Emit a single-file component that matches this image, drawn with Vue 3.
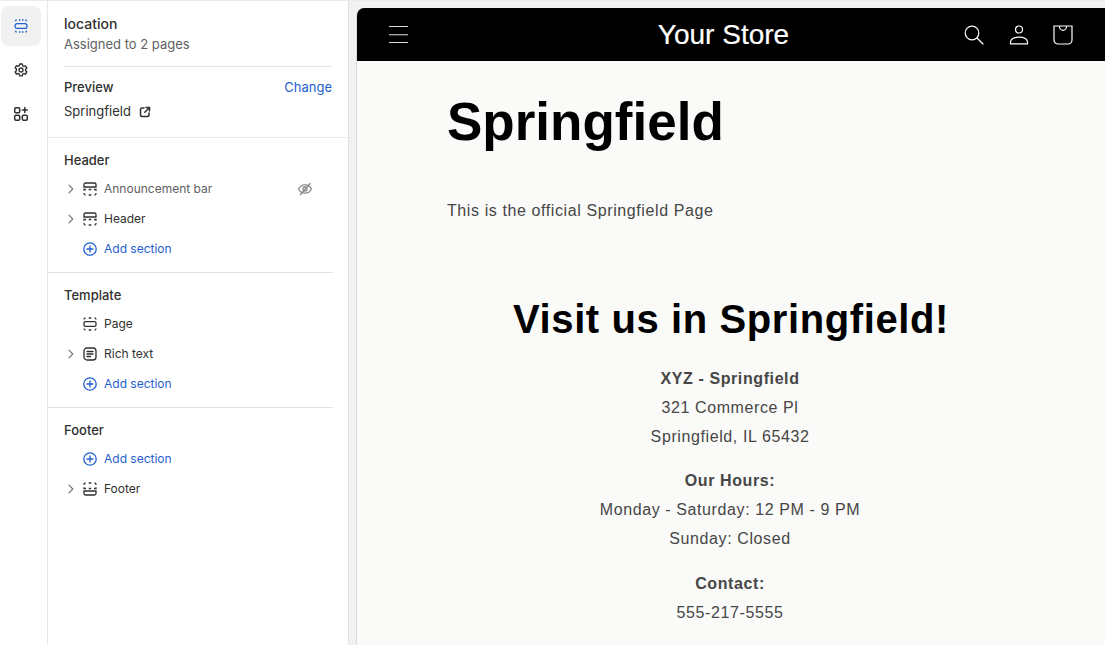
<script setup>
const hamburger = 'M0 .5h19M0 8.800h19M0 16.500h19'
</script>

<template>
  <div class="editor">
    <nav class="rail">
      <button class="rail-btn active">
        <svg width="14" height="14" viewBox="0 0 14 14" fill="none" stroke="#2563d4" stroke-width="1.300">
          <rect x="1" y="4.600" width="12" height="4.800" rx="2.200" />
          <path d="M1.500 2.200A1.200 1.200 0 0 1 2.700 1M12.500 2.200A1.200 1.200 0 0 0 11.300 1M5 1h1.500M8 1h1.500M1.500 11.800A1.200 1.200 0 0 0 2.700 13M12.500 11.800A1.200 1.200 0 0 1 11.300 13M5 13h1.500M8 13h1.500" />
        </svg>
      </button>
      <button class="rail-btn">
        <svg width="16" height="16" viewBox="0 0 20 20" fill="none" stroke="#303030" stroke-width="1.700" stroke-linejoin="round">
          <circle cx="10" cy="10" r="2.500" />
          <path d="M8.400 2.500h3.200l.5 2.200 1.500.8 2.100-.7 1.600 2.800-1.600 1.500v1.700l1.600 1.500-1.600 2.800-2.100-.7-1.500.8-.5 2.200H8.400l-.5-2.200-1.500-.8-2.100.7-1.600-2.800 1.600-1.500V8.900L2.700 7.400l1.600-2.800 2.100.7 1.500-.8z" />
        </svg>
      </button>
      <button class="rail-btn">
        <svg width="16" height="16" viewBox="0 0 16 16" fill="none" stroke="#303030" stroke-width="1.500">
          <rect x="1.700" y="1.700" width="5" height="5" rx="1.200" />
          <rect x="1.700" y="9.300" width="5" height="5" rx="1.200" />
          <rect x="9.300" y="9.300" width="5" height="5" rx="1.200" />
          <path d="M11.800 1.500v5M9.300 4h5" stroke-linecap="round" />
        </svg>
      </button>
    </nav>

    <aside class="panel">
      <div class="intro">
        <div class="page-name">location</div>
        <div class="assigned">Assigned to 2 pages</div>
        <hr class="rule" />
        <div class="preview-head">
          <span class="preview-label">Preview</span>
          <span class="change">Change</span>
        </div>
        <div class="preview-value">
          <span>Springfield</span>
          <svg width="12" height="12" viewBox="0 0 12 12" fill="none" stroke="#303030" stroke-width="1.500" stroke-linecap="round" stroke-linejoin="round">
            <path d="M5 2H3a1.500 1.500 0 0 0-1.500 1.500v5.500A1.500 1.500 0 0 0 3 10.500h5.500A1.500 1.500 0 0 0 10 9V7M7 1.500h3.500V5M10.300 1.700 5.800 6.200" />
          </svg>
        </div>
      </div>

      <section class="group">
        <h3>Header</h3>
        <div class="row muted">
          <svg class="chev" viewBox="0 0 8 10" fill="none" stroke="#777" stroke-width="1.200" stroke-linecap="round" stroke-linejoin="round"><path d="M2 1.200 5.800 5 2 8.800" /></svg>
          <svg class="ico" viewBox="0 0 14 14" fill="none" stroke="#303030" stroke-width="1.300"><path d="M1 5V2.500A1.500 1.500 0 0 1 2.500 1h9A1.500 1.500 0 0 1 13 2.500V5zM1 8.800V7.500h2M5.700 7.500h2.600M11 7.500h2v1.300M1 11v.5A1.500 1.500 0 0 0 2.500 13M13 11v.5a1.500 1.500 0 0 1-1.500 1.500M5.700 13h2.600" /></svg>
          <span class="label">Announcement bar</span>
          <svg class="eye" width="16" height="14" viewBox="0 0 16 14" fill="none" stroke="#8a8a8a" stroke-width="1.300" stroke-linecap="round"><path d="M1.500 7c1.500-2.800 3.700-4.200 6.500-4.200S13 4.200 14.500 7c-1.500 2.800-3.700 4.200-6.500 4.200S3 9.800 1.500 7z" /><circle cx="8" cy="7" r="2" /><path d="M13 1.500 3.500 12.500" /></svg>
        </div>
        <div class="row">
          <svg class="chev" viewBox="0 0 8 10" fill="none" stroke="#777" stroke-width="1.200" stroke-linecap="round" stroke-linejoin="round"><path d="M2 1.200 5.800 5 2 8.800" /></svg>
          <svg class="ico" viewBox="0 0 14 14" fill="none" stroke="#303030" stroke-width="1.300"><path d="M1 5V2.500A1.500 1.500 0 0 1 2.500 1h9A1.500 1.500 0 0 1 13 2.500V5zM1 8.800V7.500h2M5.700 7.500h2.600M11 7.500h2v1.300M1 11v.5A1.500 1.500 0 0 0 2.500 13M13 11v.5a1.500 1.500 0 0 1-1.500 1.500M5.700 13h2.600" /></svg>
          <span class="label">Header</span>
        </div>
        <div class="row add">
          <span class="chev" />
          <svg class="ico" viewBox="0 0 14 14" fill="none" stroke="#1f5fd0" stroke-width="1.300" stroke-linecap="round"><circle cx="7" cy="7" r="6.200" /><path d="M7 4v6M4 7h6" /></svg>
          <span class="label">Add section</span>
        </div>
      </section>

      <section class="group">
        <h3>Template</h3>
        <div class="row">
          <span class="chev" />
          <svg class="ico" viewBox="0 0 14 14" fill="none" stroke="#303030" stroke-width="1.300"><rect x="1" y="4.600" width="12" height="4.800" rx="1.500" /><path d="M1 2.500A1.500 1.500 0 0 1 2.500 1M13 2.500A1.500 1.500 0 0 0 11.500 1M5.700 1h2.600M1 11.500A1.500 1.500 0 0 0 2.500 13M13 11.500a1.500 1.500 0 0 1-1.500 1.500M5.700 13h2.600" /></svg>
          <span class="label">Page</span>
        </div>
        <div class="row">
          <svg class="chev" viewBox="0 0 8 10" fill="none" stroke="#777" stroke-width="1.200" stroke-linecap="round" stroke-linejoin="round"><path d="M2 1.200 5.800 5 2 8.800" /></svg>
          <svg class="ico" viewBox="0 0 14 14" fill="none" stroke="#303030" stroke-width="1.300" stroke-linecap="round"><rect x="1" y="1" width="12" height="12" rx="3" /><path d="M4 4.500h6M4 7h6M4 9.500h3.500" /></svg>
          <span class="label">Rich text</span>
        </div>
        <div class="row add">
          <span class="chev" />
          <svg class="ico" viewBox="0 0 14 14" fill="none" stroke="#1f5fd0" stroke-width="1.300" stroke-linecap="round"><circle cx="7" cy="7" r="6.200" /><path d="M7 4v6M4 7h6" /></svg>
          <span class="label">Add section</span>
        </div>
      </section>

      <section class="group">
        <h3>Footer</h3>
        <div class="row add">
          <span class="chev" />
          <svg class="ico" viewBox="0 0 14 14" fill="none" stroke="#1f5fd0" stroke-width="1.300" stroke-linecap="round"><circle cx="7" cy="7" r="6.200" /><path d="M7 4v6M4 7h6" /></svg>
          <span class="label">Add section</span>
        </div>
        <div class="row">
          <svg class="chev" viewBox="0 0 8 10" fill="none" stroke="#777" stroke-width="1.200" stroke-linecap="round" stroke-linejoin="round"><path d="M2 1.200 5.800 5 2 8.800" /></svg>
          <svg class="ico" viewBox="0 0 14 14" fill="none" stroke="#303030" stroke-width="1.300"><path d="M1 9v2.500A1.500 1.500 0 0 0 2.500 13h9a1.500 1.500 0 0 0 1.500-1.500V9zM1 5.200v1.300h2M5.700 6.500h2.600M11 6.500h2V5.200M1 3v-.5A1.500 1.500 0 0 1 2.500 1M13 3v-.5A1.500 1.500 0 0 0 11.500 1M5.700 1h2.600" /></svg>
          <span class="label">Footer</span>
        </div>
      </section>
    </aside>

    <main class="stage">
      <div class="site">
        <header class="store-bar">
          <svg class="burger" width="20" height="18" viewBox="0 0 20 18" fill="none" stroke="#ddd" stroke-width="1.100"><path :d="hamburger" /></svg>
          <div class="store-name">Your Store</div>
          <div class="store-icons">
            <svg width="20" height="20" viewBox="0 0 20 20" fill="none" stroke="#fff" stroke-width="1.200" stroke-linecap="round"><circle cx="8" cy="8" r="6.800" /><path d="M13 13 19 19" /></svg>
            <svg width="20" height="20" viewBox="0 0 20 20" fill="none" stroke="#fff" stroke-width="1.200"><circle cx="10" cy="4.500" r="3.500" /><path d="M1.500 18.800h17v-1.500c0-3.200-3-5.200-8.500-5.200s-8.500 2-8.500 5.200z" /></svg>
            <svg width="20" height="20" viewBox="0 0 20 20" fill="none" stroke="#fff" stroke-width="1.200"><path d="M1 1h18v14a4 4 0 0 1-4 4H5a4 4 0 0 1-4-4zM6.500 1.500a3.500 3.800 0 0 0 7 0" /></svg>
          </div>
        </header>
        <div class="content">
          <h1>Springfield</h1>
          <p class="lead">This is the official Springfield Page</p>
          <h2>Visit us in Springfield!</h2>
          <div class="block">
            <strong>XYZ - Springfield</strong>
            <span>321 Commerce Pl</span>
            <span>Springfield, IL 65432</span>
          </div>
          <div class="block">
            <strong>Our Hours:</strong>
            <span>Monday - Saturday: 12 PM - 9 PM</span>
            <span>Sunday: Closed</span>
          </div>
          <div class="block">
            <strong>Contact:</strong>
            <span>555-217-5555</span>
          </div>
        </div>
      </div>
    </main>
  </div>
</template>

<style>
html, body { margin: 0; overflow: hidden; background: #fff; }
</style>

<style scoped>
.editor {
  width: 1105px;
  height: 645px;
  display: flex;
  overflow: hidden;
  font-family: Inter, "Liberation Sans", sans-serif;
  color: #303030;
  box-sizing: border-box;
  border-top: 1px solid #ebebeb;
}
.rail {
  width: 46px;
  flex: none;
  border-right: 1px solid #e6e6e6;
  padding-top: 5px;
  padding-left: 1px;
  display: flex;
  flex-direction: column;
  align-items: flex-start;
  gap: 4px;
}
.rail-btn {
  width: 40px;
  height: 40px;
  border: 0;
  padding: 0;
  border-radius: 8px;
  background: transparent;
  display: flex;
  align-items: center;
  justify-content: center;
}
.rail-btn.active { background: #f1f1f1; }
.panel {
  width: 300px;
  flex: none;
  border-right: 1px solid #e3e3e3;
}
.intro {
  padding: 14px 16px 0;
  height: 137px;
  box-sizing: border-box;
  border-bottom: 1px solid #ebebeb;
}
.page-name { font-size: 14px; font-weight: 500; line-height: 17px; }
.assigned { font-size: 13px; line-height: 20px; color: #616161; margin-top: 2px; }
.rule { border: 0; border-top: 1px solid #e3e3e3; margin: 12px 0 0; }
.preview-head { display: flex; justify-content: space-between; align-items: center; margin-top: 12px; line-height: 17px; font-size: 13px; }
.preview-label { font-weight: 500; }
.change { color: #1f5fd0; }
.preview-value { display: flex; align-items: center; gap: 8px; margin-top: 7px; line-height: 17px; font-size: 13px; }
.group { padding: 14px 0 8px 16px; border-bottom: 1px solid #e3e3e3; height: 135px; box-sizing: border-box; margin-right: 15px; }
.group:last-child { border-bottom: 0; }
h3 { margin: 0 0 5px; font-size: 13px; font-weight: 500; line-height: 17px; }
.row { display: flex; align-items: center; height: 30px; font-size: 12px; }
.row.muted .label { color: #616161; }
.row.add { color: #1f5fd0; }
.label { padding-bottom: 2px; }
.chev { width: 8px; height: 10px; margin-left: 3px; margin-right: 8px; flex: none; display: block; }
.ico { width: 14px; height: 14px; flex: none; margin-right: 7px; }
.eye { margin-left: auto; margin-right: 20px; }
.stage {
  flex: 1;
  min-width: 0;
  background: #f1f1f1;
  padding: 7px 0 0 7px;
  overflow: hidden;
}
.site {
  height: 100%;
  background: #fafaf8;
  border-left: 1px solid #d9dbe3;
  border-radius: 8px 0 0 0;
  overflow: hidden;
}
.store-bar {
  height: 53px;
  background: #000;
  display: flex;
  align-items: center;
  padding: 0 32px;
  position: relative;
  color: #fff;
}
.store-name {
  position: absolute;
  left: 0;
  right: 0;
  text-align: center;
  font-family: "Liberation Sans", Arial, sans-serif;
  font-size: 28px;
  line-height: 53px;
  padding-right: 15px;
  -webkit-text-stroke: 0.2px #fff;
}
.store-icons {
  margin-left: auto;
  display: flex;
  gap: 24.5px;
  position: relative;
}
.content {
  font-family: "Liberation Sans", Arial, sans-serif;
  color: #464646;
  font-size: 16px;
  letter-spacing: 0.6px;
}
h1 {
  margin: 0;
  padding: 31px 0 0 90px;
  font-size: 53px;
  line-height: 60px;
  font-weight: 700;
  color: #000;
  letter-spacing: 0;
}
.lead { margin: 0; padding: 49px 0 0 90px; line-height: 20px; }
h2 {
  margin: 0;
  padding-top: 74px;
  padding-bottom: 22px;
  text-align: center;
  font-size: 40px;
  line-height: 48px;
  font-weight: 700;
  color: #000;
  letter-spacing: 0.6px;
}
.block {
  display: flex;
  flex-direction: column;
  align-items: center;
  line-height: 28.8px;
  margin-bottom: 16px;
  padding-right: 2px;
}
.block strong { font-weight: 700; }
</style>
